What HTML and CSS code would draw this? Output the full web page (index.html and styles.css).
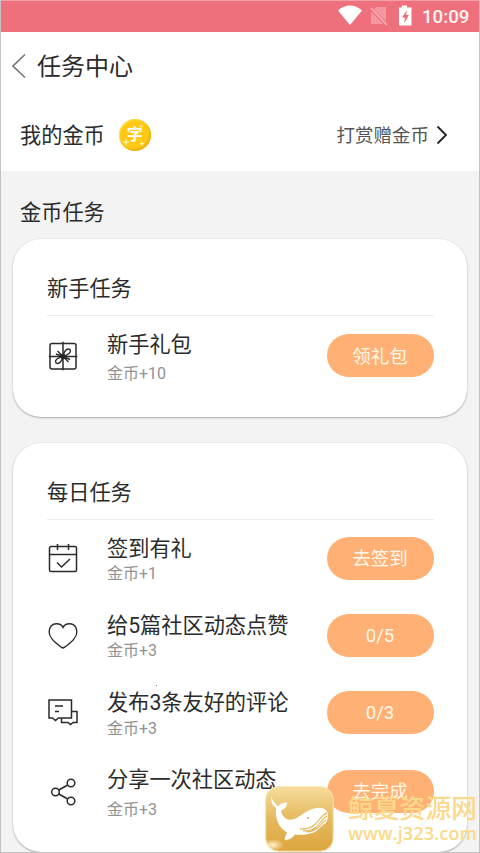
FILE: index.html
```html
<!DOCTYPE html>
<html lang="zh-CN">
<head>
<meta charset="utf-8">
<title>任务中心</title>
<link rel="stylesheet" href="styles.css">
</head>
<body>
<div class="screen">
  <header class="status">
    <svg class="status-icons" width="76" height="24" viewBox="0 0 76 24">
      <path d="M0 6.500Q12-3.500 24 6.500L12 21Z" fill="#fff"/>
      <path d="M38 3h10v17H33V8Z" fill="#f4979f"/>
      <path d="M32 4l17 17" stroke="#ee707d" stroke-width="3.500"/>
      <path d="M33 4l16 17" stroke="#f8b4bb" stroke-width="1.500"/>
      <path d="M64 1.500h5v2h4.500V21.500H61V3.500h3Z" fill="#fff"/>
      <path d="M69 6l-5 7.500h3l-1 6 5-8.500h-3Z" fill="#ee6c7a"/>
    </svg>
    <span class="clock">10:09</span>
  </header>
  <nav class="nav">
    <svg width="16" height="26" viewBox="0 0 16 26"><path d="M14 1.500L2 13 14 24.500" fill="none" stroke="#777" stroke-width="1.700"/></svg>
    <h1>任务中心</h1>
  </nav>
  <section class="wallet">
    <span class="wallet-label">我的金币</span>
    <span class="coin">字<svg width="32" height="32" viewBox="0 0 32 32"><path d="M7 19l1 3 3 1-3 1-1 3-1-3-3-1 3-1ZM23 22l.8 2 2 .8-2 .8-.8 2-.8-2-2-.8 2-.8ZM22 5l.6 1.500 1.500.6-1.500.6L22 9.200l-.6-1.500-1.500-.6 1.500-.6Z" fill="#fff3a8"/></svg></span>
    <a class="wallet-link"><span>打赏赠金币</span><svg width="12" height="20" viewBox="0 0 12 20"><path d="M1.500 1.500L10 10l-8.500 8.500" fill="none" stroke="#222" stroke-width="1.800"/></svg></a>
  </section>
  <main class="content">
    <h2>金币任务</h2>
    <section class="card card-new">
      <h3>新手任务</h3>
      <div class="task first">
        <svg class="icon" width="30" height="30" viewBox="0 0 30 30"><rect x="2" y="2.500" width="26" height="25.500" rx="2"/><path d="M15 .8v28.500M.8 15.500h28.500"/><path d="M15 15.500C16 11 18 8 20.500 8s2.500 3 .5 4.500-4 2.500-6 3c-1 4-3 7-5.500 7s-2.500-3-.5-4.500 4-2 6-2.500M9.500 10l11 11M15 15.500l-7-2.500M15 15.500l7 3" stroke-width="1.400"/><circle cx="15" cy="15.500" r="2" fill="#222"/></svg>
        <div class="info"><b>新手礼包</b><small>金币+10</small></div>
        <button>领礼包</button>
      </div>
    </section>
    <section class="card card-daily">
      <h3>每日任务</h3>
      <div class="task tight">
        <svg class="icon" width="30" height="30" viewBox="0 0 30 30"><rect x="1.500" y="2.500" width="27" height="25" rx="1.500"/><path d="M1.500 10.500h27M9.500 0v6M20.500 0v6M9 18.500l4.500 4.500 8.500-8"/></svg>
        <div class="info"><b>签到有礼</b><small>金币+1</small></div>
        <button>去签到</button>
      </div>
      <div class="task tight">
        <svg class="icon" width="30" height="30" viewBox="0 0 30 30"><path d="M15 6.500C12.500 1.800 5 1.500 2.200 6.500-.5 12 3 18 8 22c2.500 2.200 5 4.200 7 5 2-.8 4.500-2.800 7-5 5-4 8.500-10 5.800-15.500C25 1.500 17.500 1.800 15 6.500Z"/></svg>
        <div class="info"><b>给5篇社区动态点赞</b><small>金币+3</small></div>
        <button>0/5</button>
      </div>
      <div class="task even">
        <svg class="icon" width="30" height="30" viewBox="0 0 30 30"><path d="M1 2h22.500v18H10.500L7.500 22.500 4.500 20H1ZM7 8h8M7 13.500h4M23.500 13.500H29v11h-4l-2.500 2-2.500-2h-6.500V20"/></svg>
        <div class="info"><b>发布3条友好的评论</b><small>金币+3</small></div>
        <button>0/3</button>
      </div>
      <div class="task loose">
        <svg class="icon" width="30" height="30" viewBox="0 0 30 30"><circle cx="7.500" cy="15" r="3.800"/><circle cx="23" cy="6" r="3.800"/><circle cx="23" cy="24" r="3.800"/><path d="M10.800 13l9-5M10.800 17l9 5"/></svg>
        <div class="info"><b>分享一次社区动态</b><small>金币+3</small></div>
        <button>去完成</button>
      </div>
    </section>
  </main>
  <i class="speck"></i>
  <div class="watermark">
    <svg width="69" height="66" viewBox="0 0 69 66">
      <defs><linearGradient id="gold" x1="0" y1="0" x2="0" y2="1"><stop offset="0" stop-color="#f5dc9c"/><stop offset=".5" stop-color="#e5b95e"/><stop offset="1" stop-color="#dda53e"/></linearGradient><radialGradient id="glow"><stop offset="0" stop-color="#fff4cf"/><stop offset="1" stop-color="#fff4cf" stop-opacity="0"/></radialGradient></defs>
      <rect x=".7" y=".7" width="67.500" height="64.500" rx="13" fill="url(#gold)" stroke="#f7e3ae"/>
      <ellipse cx="8" cy="59" rx="11" ry="6" fill="url(#glow)"/>
      <path d="M6 10c0 5 1 9 5 12-1 11 3 20 11 24.500-1 3-3 5-2 7.500 5 0 8-3 10-5.500 18 2 33-7 33-19 0-7-7-9-14-7-9 2-15 10-22 11-6 1-10-3-11-9 3-1 6-3 6-8-4 0-7 1-9 4-2-3-5-4-7-10.500Z" fill="#fff"/>
      <path d="M62 27c-7 3-8 9-14 13-4 3-9 3-13 3M62 30c-6 3-7 9-12 12-4 3-8 3-12 3M61 34c-4 2-6 7-10 9-3 2-6 3-9 3M60 38c-3 2-5 5-8 7" fill="none" stroke="#e0b04f" stroke-width="1.100"/>
      <circle cx="43" cy="32" r="1" fill="#dba843"/>
    </svg>
    <div class="mark-text"><span class="mark-name">鲸夏资源网</span><span class="mark-url">www.j323.com</span></div>
  </div>
</div>
</body>
</html>
```
FILE: styles.css
```css
* { box-sizing: border-box; }
body {
  margin: 0;
  font-family: Roboto, "Noto Sans CJK SC", sans-serif;
  color: #2b2b2b;
}
h1, h2, h3, b, small { margin: 0; font-weight: 400; }
.screen {
  position: relative;
  width: 480px;
  height: 853px;
  overflow: hidden;
  background: #fff;
  border: 1px solid #c3c3c3;
  border-top: 0;
}
.status {
  height: 32px;
  display: flex;
  align-items: center;
  justify-content: flex-end;
  gap: 8px;
  padding-right: 10px;
  background: #ee707d;
  border-top: 1px solid #f2a0a8;
}
.status-icons { margin-top: -1px; }
.clock { width: 47px; font-size: 18.7px; font-weight: 500; line-height: 32px; color: #fff4f2; white-space: nowrap; }
.nav { height: 67px; display: flex; align-items: center; gap: 10px; padding-left: 10px; }
.nav h1 { font-size: 24px; line-height: 36px; padding-top: 2px; }
.wallet { height: 72px; display: flex; align-items: center; padding: 0 19px; }
.wallet-label { font-size: 21.2px; line-height: 30px; padding-top: 1px; }
.coin {
  position: relative;
  width: 32px;
  height: 32px;
  margin-left: 14px;
  border-radius: 50%;
  background: #fdc914;
  box-shadow: inset -2px -2px 1px #f0b514, inset 1px 1px 1px #ffdd55;
  color: #fff;
  font: 700 16px/29px "Noto Sans CJK SC", sans-serif;
  text-align: center;
}
.coin svg { position: absolute; left: 0; top: 0; }
.wallet-link {
  display: flex;
  align-items: center;
  gap: 7px;
  margin-left: auto;
  padding-right: 12px;
  font-size: 18.5px;
  line-height: 28px;
  color: #555;
}
.wallet-link span { padding-top: 2px; }
.content { height: 682px; padding: 27px 12px 0; background: #f3f3f3; }
.content h2 { padding-left: 7px; font-size: 21.2px; line-height: 30px; margin-bottom: 11px; }
.card {
  padding: 35px 33.5px 0 34px;
  background: #fff;
  border-radius: 28px;
  box-shadow: 0 1px 2px rgba(0, 0, 0, .28), 0 0 2px rgba(0, 0, 0, .08);
}
.card-new { height: 178px; margin-bottom: 26px; }
.card-daily { height: 409px; }
.card h3 {
  height: 42px;
  font-size: 21.2px;
  line-height: 30px;
  border-bottom: 1px solid #ececec;
}
.task { display: flex; align-items: center; height: 77px; }
.task.first { height: 80px; }
.task.loose { height: 81px; }
.icon {
  margin-left: 1px;
  margin-right: 29px;
  fill: none;
  stroke: #2a2a2a;
  stroke-width: 1.5;
}
.info { display: flex; flex-direction: column; flex: 1; padding-top: 2px; white-space: nowrap; }
.info b { font-size: 21.2px; line-height: 30px; }
.info small { font-size: 16px; line-height: 22px; color: #929292; }
.first small { margin-top: 3px; }
.tight small { margin-top: -1px; }
.loose small { margin-top: 4px; }
.task button {
  width: 107px;
  height: 43px;
  padding: 1px 0 0;
  margin-top: -1px;
  border: 0;
  border-radius: 22px;
  background: #ffb175;
  color: #fff8e8;
  font: 400 18.5px/42px Roboto, "Noto Sans CJK SC", sans-serif;
}
.first button { line-height: 44px; }
.speck { position: absolute; left: 155px; top: 685px; width: 1px; height: 1px; background: #777; }
.watermark { position: absolute; left: 264px; top: 786px; display: flex; gap: 14px; white-space: nowrap; }
.mark-text { display: flex; flex-direction: column; padding-top: 6px; }
.mark-name { font: 500 25.8px/30px "Noto Sans CJK SC", sans-serif; color: #fbd98a; }
.mark-url { font: 600 18.3px/22px "Open Sans", sans-serif; color: #fbd98a; }
```
